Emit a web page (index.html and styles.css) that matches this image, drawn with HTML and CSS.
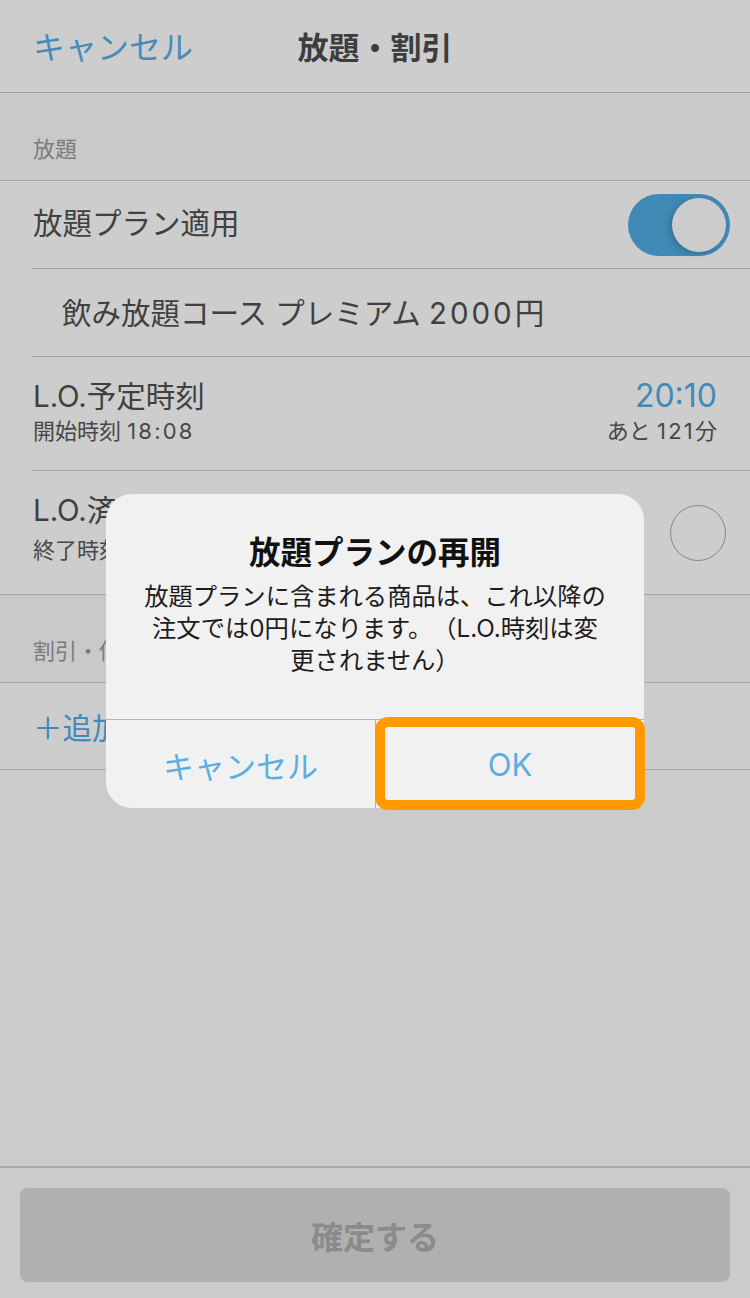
FILE: index.html
```html
<!DOCTYPE html>
<html lang="ja">
<head>
<meta charset="utf-8">
<title>放題・割引</title>
<link rel="stylesheet" href="styles.css">
</head>
<body>
<div class="screen">
  <header class="nav">
    <div class="nav-left">キャンセル</div>
    <div class="nav-title">放題・割引</div>
    <div class="nav-right"></div>
  </header>

  <main class="list">
    <div class="section-header">放題</div>
    <div class="group">
      <div class="row row-inset row-first">
        <span class="row-title">放題プラン適用</span>
        <span class="toggle"><span class="knob"></span></span>
      </div>
      <div class="row row-inset row-plan">
        <span class="row-title">飲み放題コース プレミアム <span class="num">2000</span>円</span>
      </div>
      <div class="row row-inset row-tall">
        <div class="stack">
          <span class="row-title">L.O.予定時刻</span>
          <span class="row-sub">開始時刻 <span class="num">18:08</span></span>
        </div>
        <div class="stack stack-right">
          <span class="time">20:10</span>
          <span class="row-sub">あと <span class="num">121</span>分</span>
        </div>
      </div>
      <div class="row row-lo">
        <div class="stack">
          <span class="row-title">L.O.済みにする</span>
          <span class="row-sub">終了時刻 --:--</span>
        </div>
        <span class="circle"></span>
      </div>
    </div>
    <div class="section-header">割引・値引</div>
    <div class="group">
      <div class="row row-add">
        <span class="add">＋追加する</span>
      </div>
    </div>
  </main>

  <footer class="footer">
    <div class="confirm">確定する</div>
  </footer>

  <div class="dialog">
    <div class="dialog-body">
      <div class="dialog-title">放題プランの再開</div>
      <div class="dialog-msg">放題プランに含まれる商品は、これ以降の<br>注文では0円になります。（L.O.時刻は変<br>更されません）</div>
    </div>
    <div class="dialog-actions">
      <div class="dialog-btn">キャンセル</div>
      <div class="dialog-btn">OK</div>
    </div>
  </div>
  <div class="highlight"></div>
</div>
</body>
</html>
```

FILE: styles.css
```css
* { box-sizing: border-box; }
html, body { margin: 0; padding: 0; }
body {
  font-family: Inter, "Noto Sans CJK JP", "Noto Sans", sans-serif;
  text-spacing-trim: space-all;
  background: #cccccc;
}
.screen {
  position: relative;
  width: 750px;
  height: 1298px;
  display: flex;
  flex-direction: column;
  background: #cbcbcb;
  overflow: hidden;
}
.nav {
  height: 93px;
  display: grid;
  grid-template-columns: 1fr auto 1fr;
  align-items: center;
  background: #cdcdcd;
  border-bottom: 1px solid #a2a2a2;
  padding-bottom: 2px;
}
.nav-left {
  padding-left: 33px;
  font-size: 32px;
  color: #468cbb;
}
.nav-title {
  font-size: 31px;
  font-weight: 700;
  color: #3d3d3d;
}
.list {
  flex: 1;
  display: flex;
  flex-direction: column;
}
.section-header {
  height: 88px;
  padding: 40px 33px 0;
  font-size: 22px;
  line-height: 32px;
  color: #7b7b7b;
  background: #c9c9c9;
  border-bottom: 1px solid #a6a6a6;
}
.group {
  background: #cdcdcd;
  border-bottom: 1px solid #a6a6a6;
}
.row {
  display: flex;
  align-items: center;
  justify-content: space-between;
}
.row-inset {
  margin-left: 32px;
  padding-left: 1px;
  padding-right: 20px;
  height: 88px;
  border-bottom: 1px solid #a6a6a6;
}
.row-first .row-title { margin-top: -4px; }
.row-title {
  font-size: 29.5px;
  line-height: 38px;
  color: #404040;
}
.num { letter-spacing: 0.1em; }
.row-plan { padding-left: 30px; }
.row-tall {
  height: 114px;
  padding-right: 33px;
  align-items: stretch;
  padding-top: 20px;
}
.stack {
  display: flex;
  flex-direction: column;
}
.stack-right { align-items: flex-end; }
.row-sub {
  font-size: 22px;
  line-height: 32px;
  color: #474747;
}
.time {
  font-size: 32px;
  line-height: 38px;
  color: #4189b8;
}
.toggle {
  position: relative;
  width: 102px;
  height: 62px;
  border-radius: 31px;
  background: #4189b5;
  display: flex;
  align-items: center;
  justify-content: flex-end;
  padding-right: 4px;
}
.knob {
  width: 54px;
  height: 54px;
  border-radius: 50%;
  background: #cccccc;
  box-shadow: -3px 2px 6px rgba(0, 0, 0, 0.18);
}
.row-lo {
  height: 123px;
  padding: 0 24px 0 33px;
}
.row-lo .stack { margin-top: -8px; }
.row-lo .row-sub { margin-top: 5px; }
.circle {
  width: 56px;
  height: 56px;
  border-radius: 50%;
  border: 1.5px solid #858585;
}
.row-add {
  height: 86px;
  padding-left: 33px;
}
.add {
  font-size: 29.5px;
  color: #4189b8;
}
.footer {
  height: 132px;
  border-top: 2px solid #a9a9a9;
  background: #cbcbcb;
  padding: 20px 20px 16px;
}
.confirm {
  height: 94px;
  border-radius: 8px;
  background: #b0b0b0;
  display: flex;
  align-items: center;
  justify-content: center;
  font-size: 32px;
  font-weight: 700;
  color: #8b8b8b;
}
.dialog {
  position: absolute;
  left: 106px;
  top: 494px;
  width: 538px;
  height: 314px;
  border-radius: 26px;
  background: #f1f1f1;
  display: flex;
  flex-direction: column;
  overflow: hidden;
}
.dialog-body {
  flex: 1;
  padding-top: 37px;
  text-align: center;
}
.dialog-title {
  font-size: 31.5px;
  font-weight: 700;
  line-height: 44px;
  color: #111111;
}
.dialog-msg {
  margin-top: 5px;
  font-size: 24.3px;
  line-height: 32px;
  color: #1c1c1c;
}
.dialog-actions {
  height: 89px;
  display: grid;
  grid-template-columns: 269px 1fr;
  border-top: 1px solid #b4b4b4;
}
.dialog-btn {
  display: flex;
  align-items: center;
  justify-content: center;
  font-size: 31px;
  color: #5aaee3;
}
.dialog-btn + .dialog-btn { border-left: 1px solid #b4b4b4; }
.highlight {
  position: absolute;
  left: 375px;
  top: 717px;
  width: 270px;
  height: 93px;
  border: 10px solid #ff9900;
  border-radius: 13px;
}
```
